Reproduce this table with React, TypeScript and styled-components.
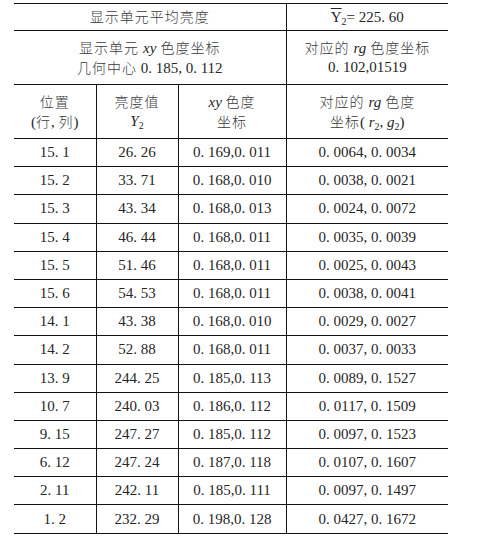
import React from "react";
import styled, { createGlobalStyle } from "styled-components";

const GlobalStyle = createGlobalStyle`
  html, body {
    margin: 0;
    padding: 0;
    background: #fff;
  }
  body {
    font-family: "Liberation Serif", "Noto Sans CJK SC", serif;
    color: #262626;
  }
`;

const Page = styled.div`
  width: 485px;
  height: 540px;
  padding: 3px 0 0 14px;
  box-sizing: border-box;
  overflow: hidden;
`;

const Table = styled.table`
  width: 434px;
  table-layout: fixed;
  border-collapse: collapse;
  border-top: 1px solid #111;
  border-bottom: 1px solid #111;
`;

const Row = styled.tr<{ h: number }>`
  height: ${(p) => p.h}px;
`;

const Cell = styled.td<{ first?: boolean }>`
  padding: 0;
  text-align: center;
  vertical-align: middle;
  border-top: 1px solid #111;
  border-left: ${(p) => (p.first ? "none" : "1px solid #111")};
  font-size: 15px;
  line-height: 19px;
  white-space: nowrap;
`;

const Han = styled.span`
  font-family: "Noto Sans CJK SC", serif;
  font-size: 14px;
  font-weight: 300;
  letter-spacing: 1px;
  color: #3a3a3a;
`;

const It = styled.i<{ gap?: number }>`
  font-family: "Liberation Serif", serif;
  font-style: italic;
  font-size: 15px;
  margin: 0 ${(p) => p.gap ?? 4}px;
`;

const Sub = styled.sub`
  font-size: 10px;
  vertical-align: -3px;
  line-height: 0;
`;

const Over = styled.span`
  text-decoration: overline;
`;

const rows: [string, string, string, string][] = [
  ["15. 1", "26. 26", "0. 169,0. 011", "0. 0064, 0. 0034"],
  ["15. 2", "33. 71", "0. 168,0. 010", "0. 0038, 0. 0021"],
  ["15. 3", "43. 34", "0. 168,0. 013", "0. 0024, 0. 0072"],
  ["15. 4", "46. 44", "0. 168,0. 011", "0. 0035, 0. 0039"],
  ["15. 5", "51. 46", "0. 168,0. 011", "0. 0025, 0. 0043"],
  ["15. 6", "54. 53", "0. 168,0. 011", "0. 0038, 0. 0041"],
  ["14. 1", "43. 38", "0. 168,0. 010", "0. 0029, 0. 0027"],
  ["14. 2", "52. 88", "0. 168,0. 011", "0. 0037, 0. 0033"],
  ["13. 9", "244. 25", "0. 185,0. 113", "0. 0089, 0. 1527"],
  ["10. 7", "240. 03", "0. 186,0. 112", "0. 0117, 0. 1509"],
  ["9. 15", "247. 27", "0. 185,0. 112", "0. 0097, 0. 1523"],
  ["6. 12", "247. 24", "0. 187,0. 118", "0. 0107, 0. 1607"],
  ["2. 11", "242. 11", "0. 185,0. 111", "0. 0097, 0. 1497"],
  ["1. 2", "232. 29", "0. 198,0. 128", "0. 0427, 0. 1672"],
];

export default function App() {
  return (
    <>
      <GlobalStyle />
      <Page>
        <Table>
          <colgroup>
            <col style={{ width: 82 }} />
            <col style={{ width: 82 }} />
            <col style={{ width: 108 }} />
            <col style={{ width: 162 }} />
          </colgroup>
          <tbody>
            <Row h={27}>
              <Cell first colSpan={3}>
                <Han>显示单元平均亮度</Han>
              </Cell>
              <Cell>
                <Over>Y</Over>
                <Sub>2</Sub>= 225. 60
              </Cell>
            </Row>
            <Row h={54}>
              <Cell first colSpan={3}>
                <Han>显示单元</Han>
                <It>xy</It>
                <Han>色度坐标</Han>
                <br />
                <Han>几何中心</Han> 0. 185, 0. 112
              </Cell>
              <Cell>
                <Han>对应的</Han>
                <It>rg</It>
                <Han>色度坐标</Han>
                <br />
                0. 102,01519
              </Cell>
            </Row>
            <Row h={54}>
              <Cell first>
                <Han>位置</Han>
                <br />
                (<Han>行</Han>, <Han>列</Han>)
              </Cell>
              <Cell>
                <Han>亮度值</Han>
                <br />
                <It gap={0}>Y</It>
                <Sub>2</Sub>
              </Cell>
              <Cell>
                <It gap={0}>xy</It> <Han>色度</Han>
                <br />
                <Han>坐标</Han>
              </Cell>
              <Cell>
                <Han>对应的</Han>
                <It>rg</It>
                <Han>色度</Han>
                <br />
                <Han>坐标</Han>( <It gap={0}>r</It>
                <Sub>2</Sub>, <It gap={0}>g</It>
                <Sub>2</Sub>)
              </Cell>
            </Row>
            {rows.map((r) => (
              <Row h={28.2} key={r[0]}>
                <Cell first>{r[0]}</Cell>
                <Cell>{r[1]}</Cell>
                <Cell>{r[2]}</Cell>
                <Cell>{r[3]}</Cell>
              </Row>
            ))}
          </tbody>
        </Table>
      </Page>
    </>
  );
}
